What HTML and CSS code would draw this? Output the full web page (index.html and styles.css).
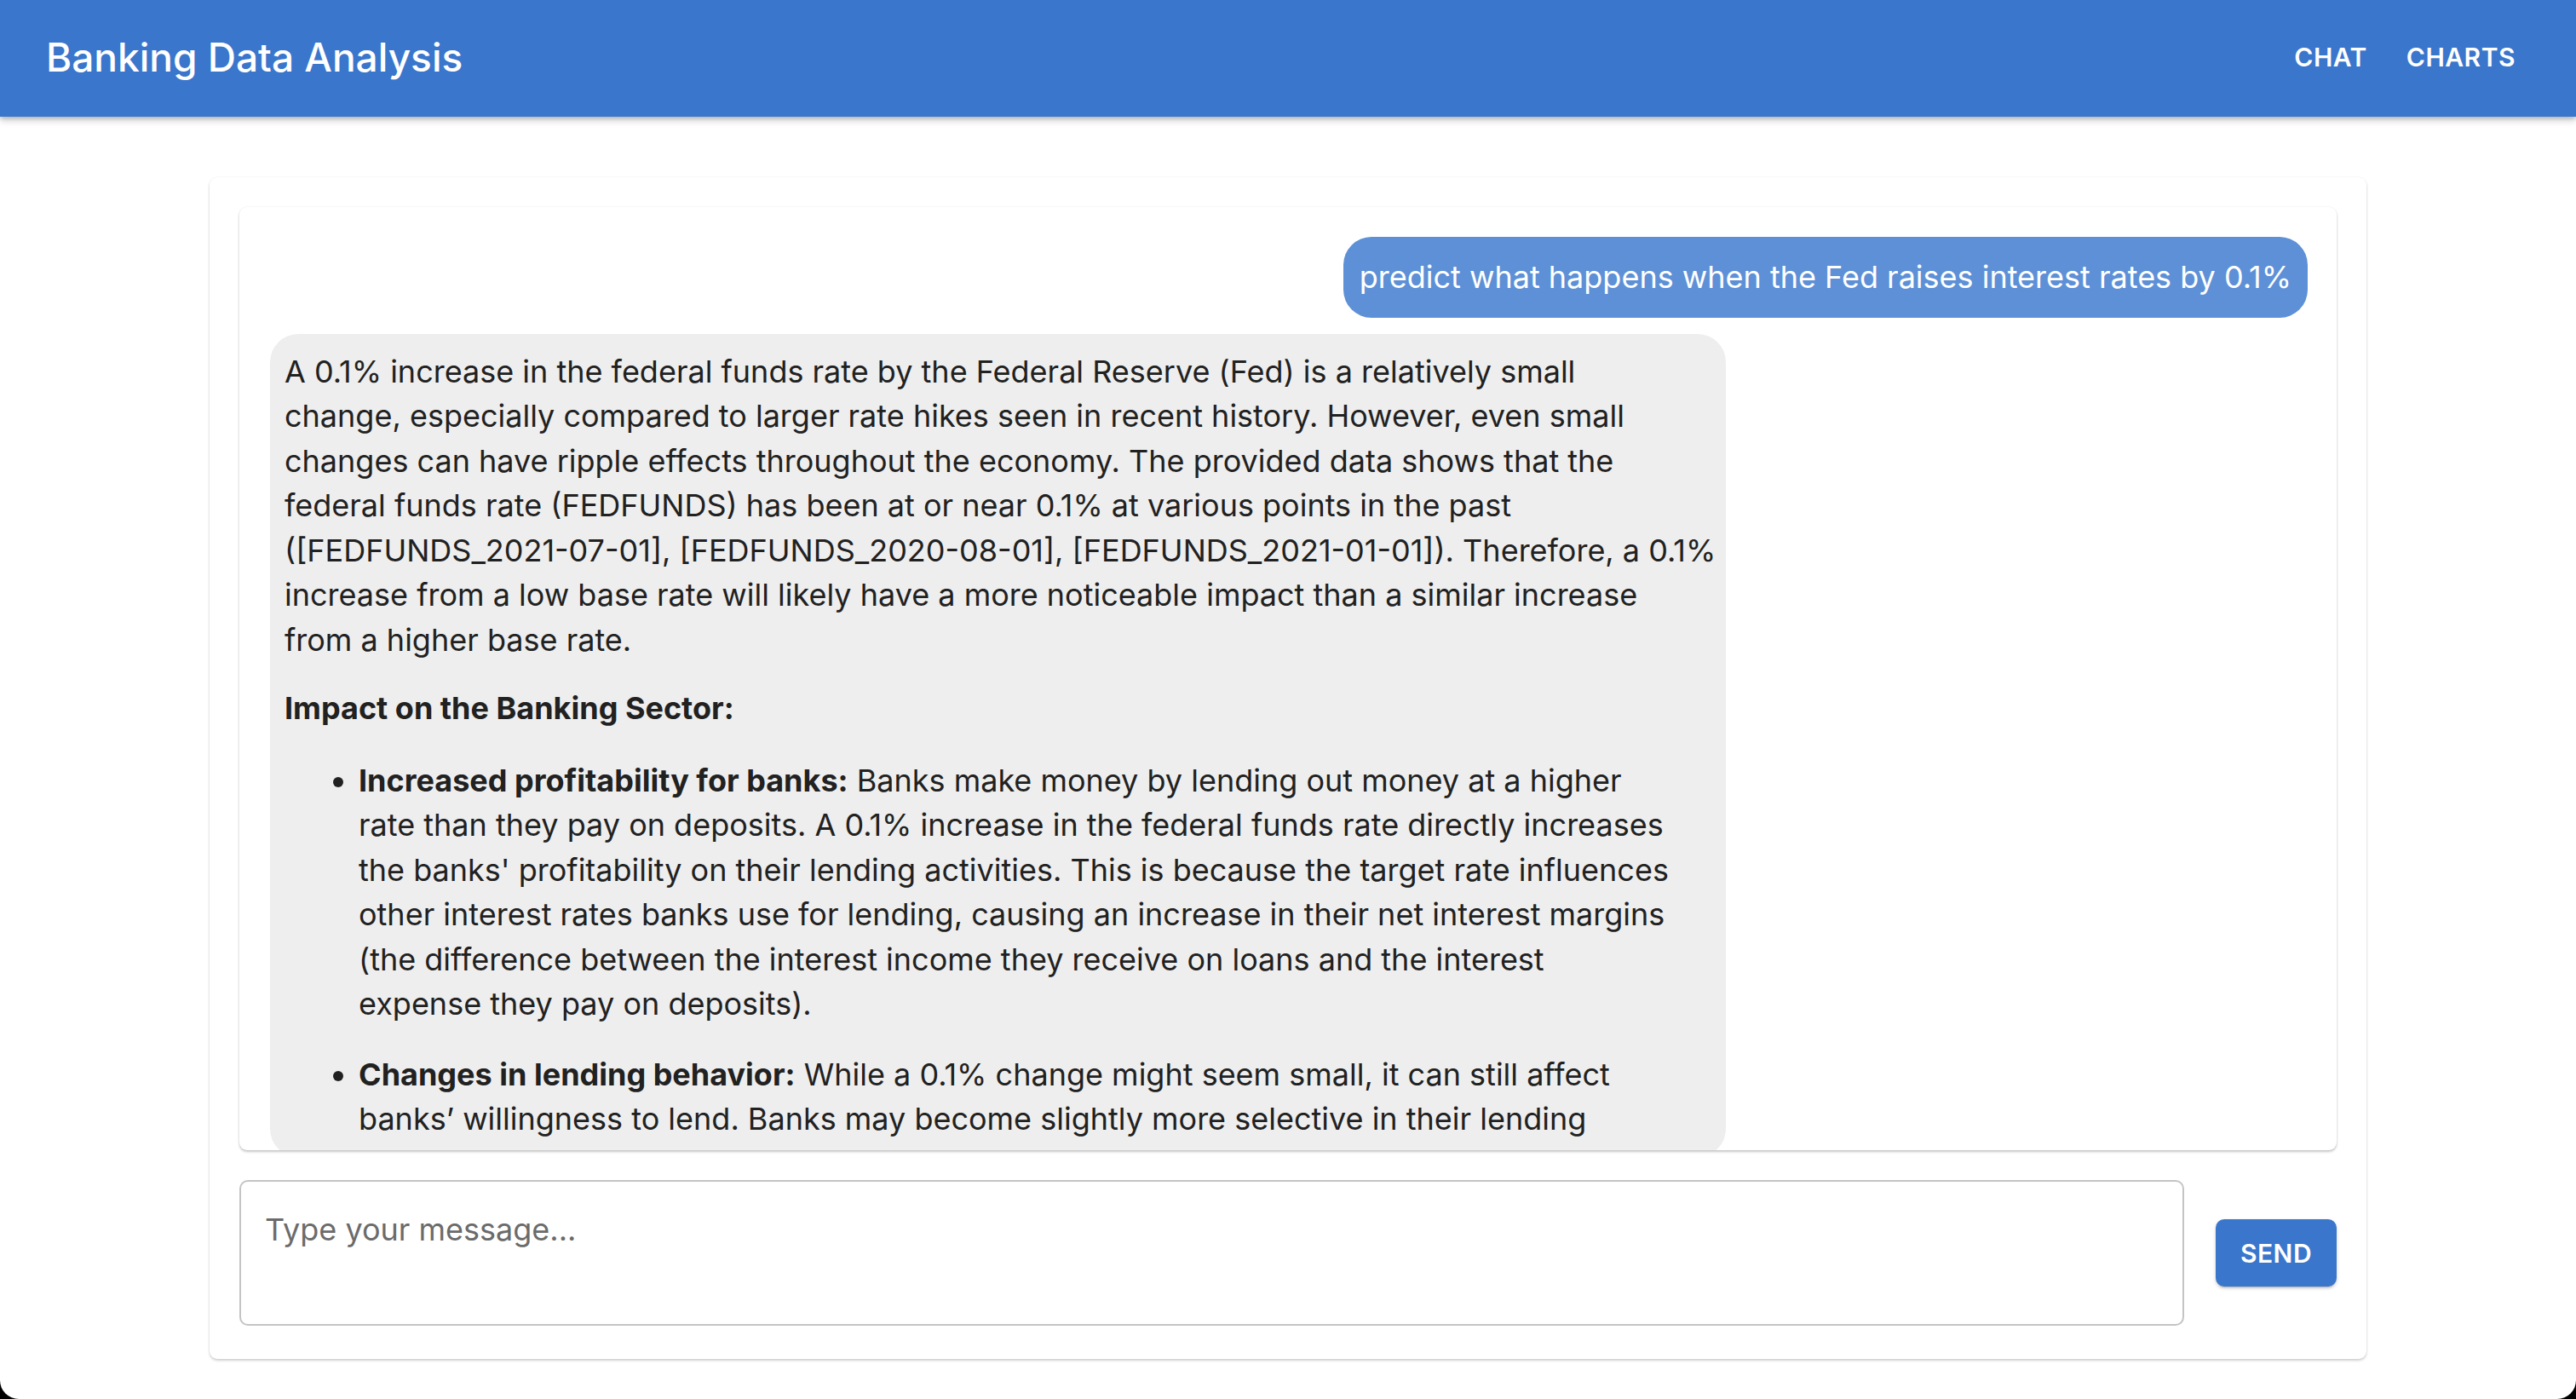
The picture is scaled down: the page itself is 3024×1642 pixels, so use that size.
FILE: index.html
```html
<!DOCTYPE html>
<html lang="en">
<head>
<meta charset="utf-8">
<title>Banking Data Analysis</title>
<link rel="stylesheet" href="styles.css">
</head>
<body>
<header class="appbar">
  <h1 class="brand">Banking Data Analysis</h1>
  <nav class="nav">
    <a class="nav-link" href="#">Chat</a>
    <a class="nav-link" href="#">Charts</a>
  </nav>
</header>
<main class="page">
  <section class="chat-card">
    <div class="messages">
      <div class="msg msg-user">predict what happens when the Fed raises interest rates by 0.1%</div>
      <div class="msg msg-bot">
        <p>A 0.1% increase in the federal funds rate by the Federal Reserve (Fed) is a relatively small<br>change, especially compared to larger rate hikes seen in recent history. However, even small<br>changes can have ripple effects throughout the economy. The provided data shows that the<br>federal funds rate (FEDFUNDS) has been at or near 0.1% at various points in the past<br>([FEDFUNDS_2021-07-01], [FEDFUNDS_2020-08-01], [FEDFUNDS_2021-01-01]). Therefore, a 0.1%<br>increase from a low base rate will likely have a more noticeable impact than a similar increase<br>from a higher base rate.</p>
        <p><strong>Impact on the Banking Sector:</strong></p>
        <ul>
          <li><p><strong>Increased profitability for banks:</strong> Banks make money by lending out money at a higher<br>rate than they pay on deposits. A 0.1% increase in the federal funds rate directly increases<br>the banks' profitability on their lending activities. This is because the target rate influences<br>other interest rates banks use for lending, causing an increase in their net interest margins<br>(the difference between the interest income they receive on loans and the interest<br>expense they pay on deposits).</p></li>
          <li><p><strong>Changes in lending behavior:</strong> While a 0.1% change might seem small, it can still affect<br>banks’ willingness to lend. Banks may become slightly more selective in their lending</p></li>
        </ul>
      </div>
    </div>
    <form class="composer" onsubmit="return false">
      <textarea class="composer-input" placeholder="Type your message..."></textarea>
      <button class="send-btn" type="button">Send</button>
    </form>
  </section>
</main>
</body>
</html>
```
FILE: styles.css
```css
html {
  background: #000;
}
body {
  margin: 0;
  height: 1642px;
  overflow: hidden;
  background: #fff;
  border-radius: 0 0 22px 22px;
  font-family: Inter, "Open Sans", "Liberation Sans", sans-serif;
  color: #212121;
}
.appbar {
  position: relative;
  z-index: 2;
  height: 137px;
  box-sizing: border-box;
  display: flex;
  align-items: center;
  justify-content: space-between;
  padding: 0 71px 0 54px;
  background: #3a76cc;
  color: #fff;
  box-shadow: 0 4px 8px rgba(0, 0, 0, 0.22), 0 2px 4px rgba(0, 0, 0, 0.12);
}
.brand {
  margin: 0 0 3px;
  font-size: 46px;
  font-weight: 500;
  letter-spacing: 0;
}
.nav {
  display: flex;
  gap: 46px;
  margin-bottom: 4px;
}
.nav-link {
  color: #fff;
  text-decoration: none;
  text-transform: uppercase;
  font-size: 30px;
  font-weight: 600;
  letter-spacing: 0.5px;
}
.page {
  display: flex;
  justify-content: center;
  padding-top: 71px;
}
.chat-card {
  width: 2532px;
  height: 1387px;
  box-sizing: border-box;
  padding: 35px 35px 39px;
  display: flex;
  flex-direction: column;
  gap: 35px;
  background: #fff;
  border-radius: 9px;
  box-shadow: 0 2px 3px rgba(0, 0, 0, 0.18), 0 0 2px rgba(0, 0, 0, 0.08);
}
.messages {
  flex: 1;
  min-height: 0;
  overflow: hidden;
  box-sizing: border-box;
  padding: 35px 34px 0 36px;
  display: flex;
  flex-direction: column;
  align-items: flex-start;
  gap: 19px;
  border-radius: 9px;
  box-shadow: 0 2px 3px rgba(0, 0, 0, 0.22), 0 0 2px rgba(0, 0, 0, 0.08);
  font-size: 36px;
  line-height: 52.5px;
}
.msg {
  border-radius: 33px;
}
.msg-user {
  align-self: flex-end;
  padding: 21px 19px;
  background: #5d90d6;
  color: #fff;
}
.msg-bot {
  width: 1709px;
  box-sizing: border-box;
  padding: 18px 17px;
  background: #eeeeee;
  flex-shrink: 0;
}
.msg-bot p {
  margin: 0 0 28px;
  white-space: nowrap;
}
.msg-bot ul {
  margin: 32px 0 0;
  padding-left: 87px;
}
.msg-bot li + li {
  margin-top: 30px;
}
.msg-bot li p {
  margin: 0;
}
.msg-bot strong {
  font-weight: 700;
}
.composer {
  display: flex;
  align-items: center;
  gap: 37px;
  margin: 0;
}
.composer-input {
  flex: 1;
  height: 171px;
  box-sizing: border-box;
  padding: 30px 28px;
  border: 2px solid #c4c4c4;
  border-radius: 10px;
  resize: none;
  font-family: inherit;
  font-size: 36px;
  line-height: 52.5px;
  color: #212121;
  outline: none;
}
.composer-input::placeholder {
  color: #6b6b6b;
}
.send-btn {
  width: 142px;
  height: 79px;
  border: 0;
  border-radius: 10px;
  background: #3a76cc;
  color: #fff;
  font-family: inherit;
  font-size: 30px;
  font-weight: 600;
  text-transform: uppercase;
  letter-spacing: 0.5px;
  box-shadow: 0 3px 2px -2px rgba(0, 0, 0, 0.2), 0 2px 4px rgba(0, 0, 0, 0.18);
}
```
